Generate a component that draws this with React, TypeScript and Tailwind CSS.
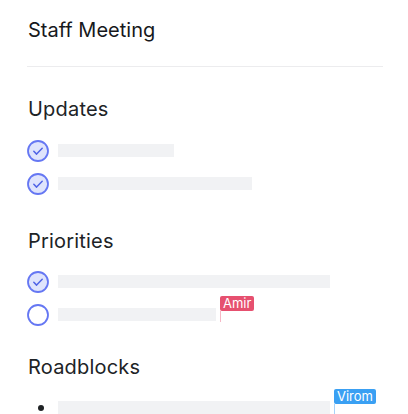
import React from 'react';

type Row = { done?: boolean; width: number; cursor?: { name: string; color: string; line: string } };

const CheckCircle: React.FC<{ done?: boolean }> = ({ done }) => (
  <svg width="22" height="22" viewBox="0 0 22 22" className="shrink-0">
    <circle cx="11" cy="11" r="10" fill={done ? '#dfe4fc' : '#ffffff'} stroke="#6577f3" strokeWidth="1.8" />
    {done && <path d="M6.8 11.3l2.8 2.8 5.6-5.8" fill="none" stroke="#5064e6" strokeWidth="1.5" strokeLinecap="round" strokeLinejoin="round" />}
  </svg>
);

const Cursor: React.FC<{ name: string; color: string; line: string }> = ({ name, color, line }) => (
  <span className={`relative self-start ml-[4px] w-px h-[11px] mt-[3px] ${line}`}>
    <span
      className={`absolute bottom-full left-0 px-[3px] rounded-[2px] text-white text-[13px] leading-[15px] whitespace-nowrap ${color}`}
    >
      {name}
    </span>
  </span>
);

const TaskRow: React.FC<{ row: Row }> = ({ row }) => (
  <div className="flex items-center h-[33px]">
    <CheckCircle done={row.done} />
    <div className="flex items-start ml-[9px]">
      <div className="h-[13px] bg-[#f1f2f4]" style={{ width: row.width }} />
      {row.cursor && <Cursor {...row.cursor} />}
    </div>
  </div>
);

const Heading: React.FC<{ children: React.ReactNode }> = ({ children }) => (
  <h2 className="text-[20px] leading-[28px] text-[#202326] tracking-[0.2px]">{children}</h2>
);

export default function App() {
  const updates: Row[] = [
    { done: true, width: 116 },
    { done: true, width: 194 },
  ];
  const priorities: Row[] = [
    { done: true, width: 272 },
    { done: false, width: 158, cursor: { name: 'Amir', color: 'bg-[#e6506f]', line: 'bg-[#f6b8c6]' } },
  ];

  return (
    <div
      className="w-[408px] h-[414px] overflow-hidden bg-white pl-[27px] pr-[25px]"
      style={{ fontFamily: 'Inter, "Noto Sans", sans-serif' }}
    >
      <div className="pt-[15px] pb-[21px] border-b border-[#ececee]">
        <h1 className="text-[20px] leading-[30px] text-[#17191c] pl-[1px]">Staff Meeting</h1>
      </div>

      <div className="pt-[28px] pl-[1px]">
        <Heading>Updates</Heading>
      </div>
      <div className="mt-[11px]">
        {updates.map((r, i) => (
          <TaskRow key={i} row={r} />
        ))}
      </div>

      <div className="pt-[27px] pl-[1px]">
        <Heading>Priorities</Heading>
      </div>
      <div className="mt-[10px]">
        {priorities.map((r, i) => (
          <TaskRow key={i} row={r} />
        ))}
      </div>

      <div className="pt-[22px] pl-[1px]">
        <Heading>Roadblocks</Heading>
      </div>
      <div className="mt-[19px] flex items-center h-[16px]">
        <span className="w-[22px] flex justify-center">
          <span className="w-[6px] h-[6px] rounded-full bg-[#1f2225] ml-[6px]" />
        </span>
        <div className="flex items-start ml-[9px]">
          <div className="h-[13px] w-[272px] bg-[#f1f2f4]" />
          <Cursor name="Virom" color="bg-[#3aa0f3]" line="bg-[#a9d3f9]" />
        </div>
      </div>
    </div>
  );
}
